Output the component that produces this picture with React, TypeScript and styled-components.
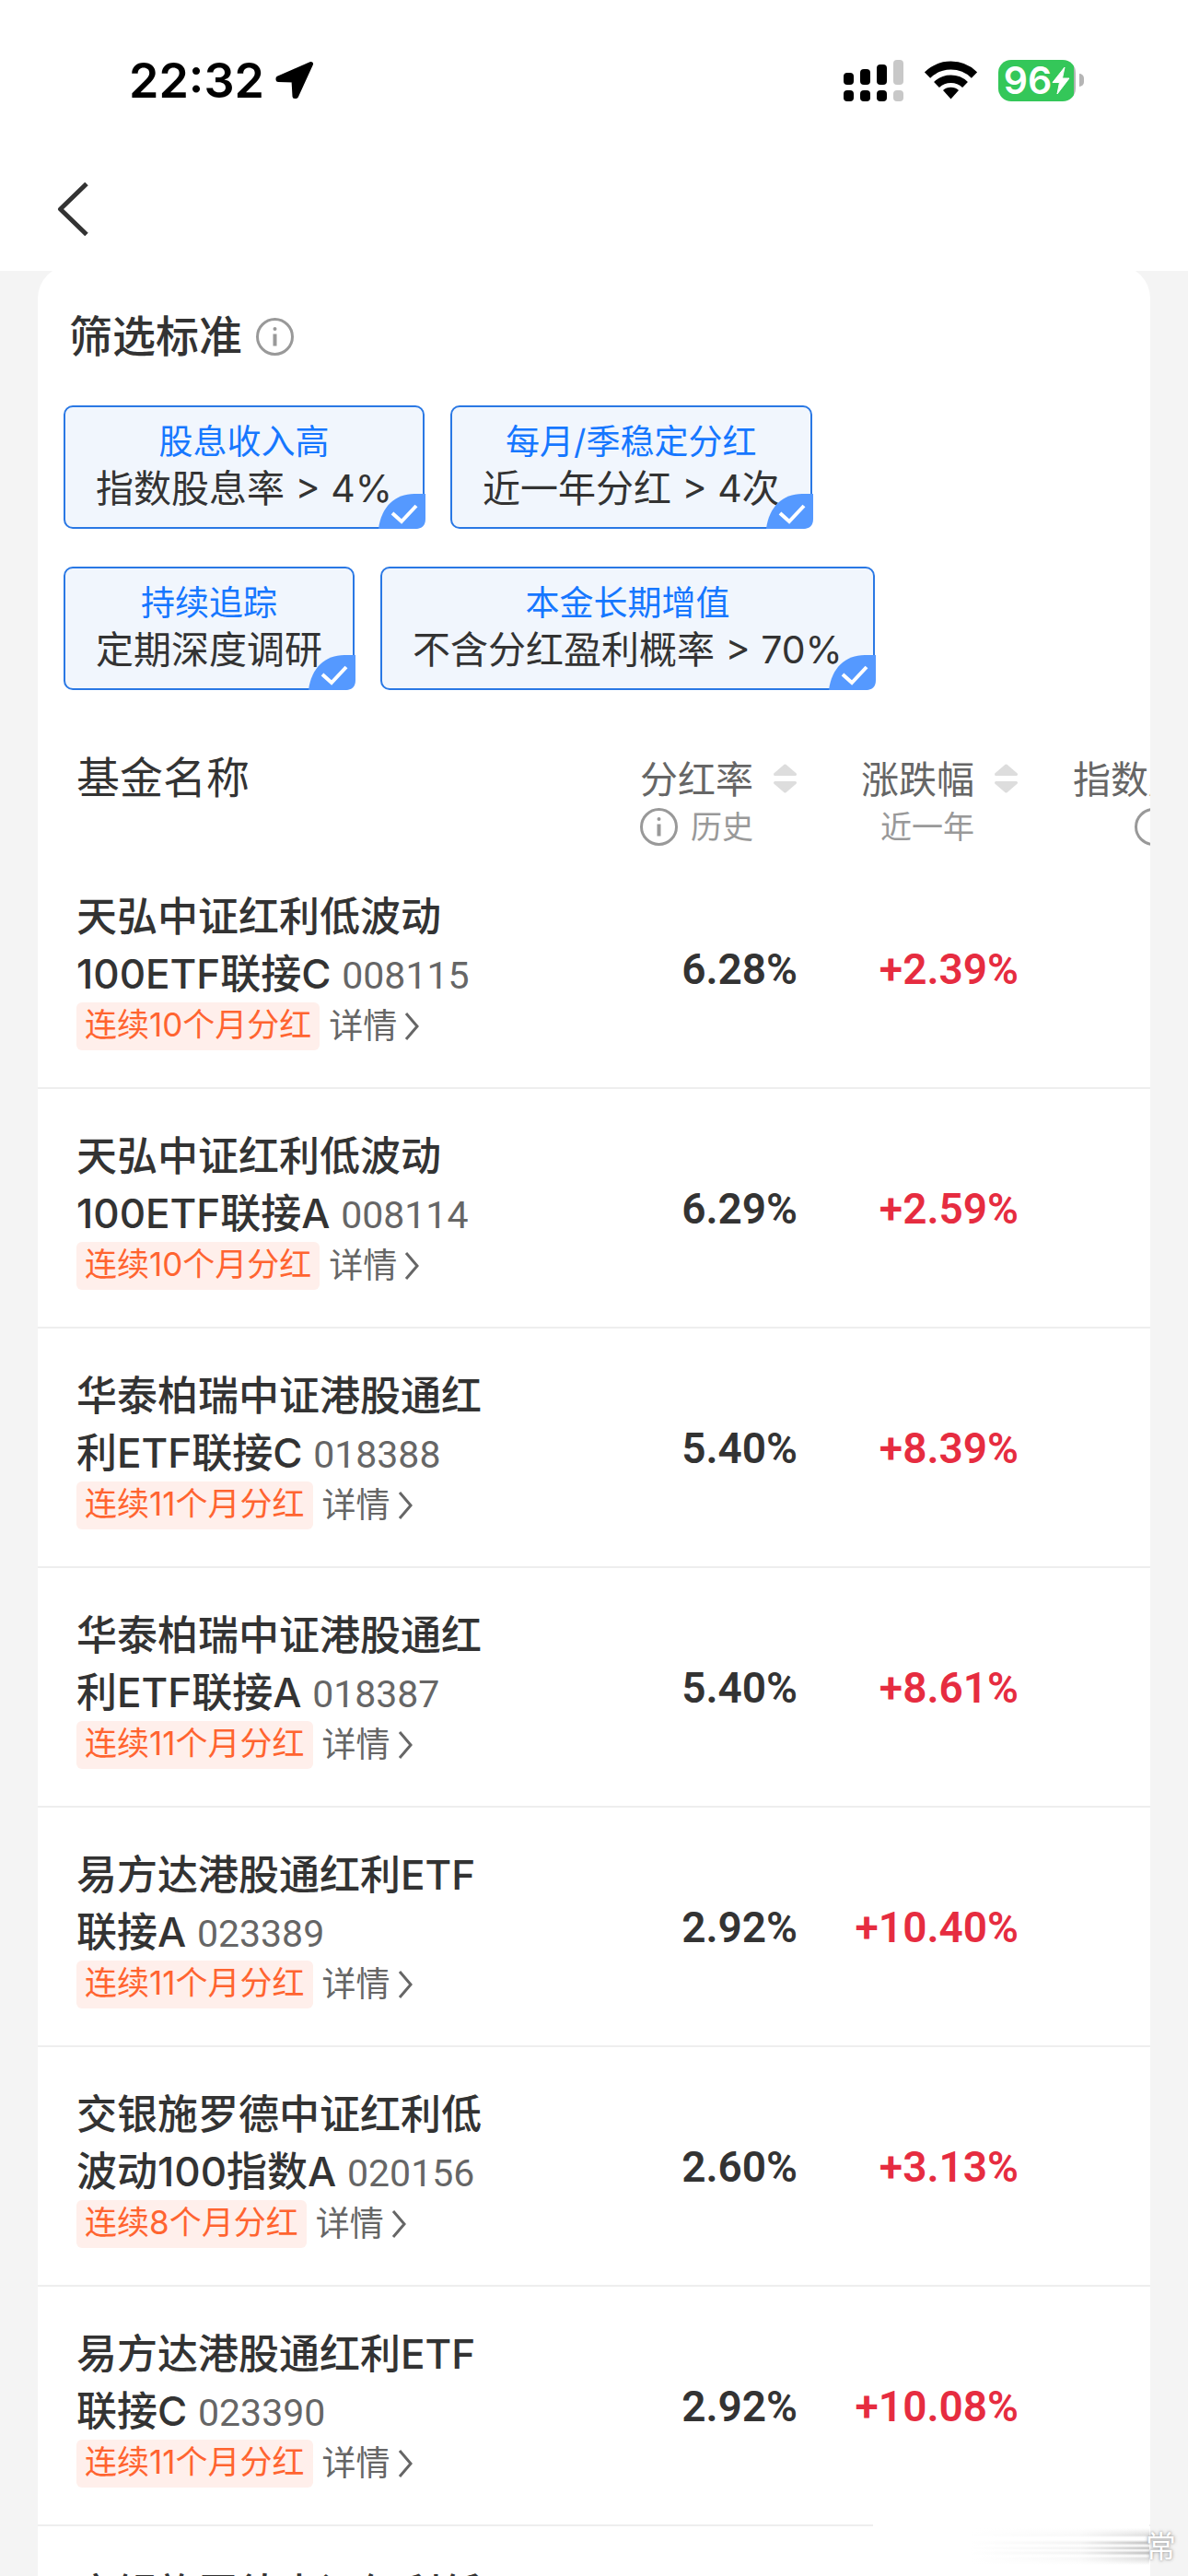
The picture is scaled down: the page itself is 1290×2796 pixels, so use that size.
import React from "react";
import styled, { createGlobalStyle } from "styled-components";

const CJK = '"Noto Sans CJK SC", sans-serif';

const GlobalStyle = createGlobalStyle`
  * { box-sizing: border-box; }
  body { margin: 0; background: #f4f4f4; font-family: Inter, ${CJK}; color: #333; }
  button { border: 0; padding: 0; background: none; font: inherit; color: inherit; display: flex; }
  svg { display: block; flex: none; }
`;

const Screen = styled.div`
  position: relative;
  height: 100vh;
  overflow: hidden;
`;

const Header = styled.header`
  background: #fff;
  padding-bottom: 14px;
`;

const StatusBar = styled.div`
  display: flex;
  justify-content: space-between;
  align-items: center;
  height: 174px;
  padding: 0 113px 0 140px;
  color: #000;
`;

const Clock = styled.div`
  display: flex;
  align-items: center;
  gap: 12px;
  font-size: 52px;
  font-weight: 600;
`;

const StatusIcons = styled.div`
  display: flex;
  align-items: center;
  gap: 23px;
`;

const Battery = styled.div`
  display: flex;
  align-items: center;
  gap: 4px;
`;

const BatteryBody = styled.div`
  display: flex;
  align-items: center;
  justify-content: center;
  width: 84px;
  height: 45px;
  border-radius: 14px;
  background: linear-gradient(to left, #b5b5b5 2px, #34c759 2px);
  color: #fff;
  font-size: 41px;
  line-height: 45px;
  font-weight: 600;
`;

const BatteryTip = styled.i`
  width: 5px;
  height: 14px;
  border-radius: 0 6px 6px 0;
  background: #b5b5b5;
`;

const NavBar = styled.nav`
  display: flex;
  align-items: center;
  height: 106px;
  padding-left: 61px;
`;

const Card = styled.main`
  margin: -6px 41px 0;
  overflow: hidden;
  border-radius: 36px 36px 0 0;
  background: #fff;
`;

const TitleRow = styled.div`
  display: flex;
  align-items: center;
  gap: 15px;
  height: 70px;
  margin-top: 42px;
  padding-left: 34px;
`;

const Title = styled.h1`
  margin: 0;
  font-size: 47px;
  line-height: 70px;
  font-weight: 500;
`;

const Filters = styled.div`
  display: flex;
  flex-direction: column;
  gap: 41px;
  padding: 40px 28px 0;
`;

const FilterLine = styled.div`
  display: flex;
  gap: 28px;
`;

const Chip = styled.label`
  position: relative;
  display: flex;
  flex-direction: column;
  align-items: center;
  height: 134px;
  padding: 13px 33px 0;
  border: 2px solid #2a78e4;
  border-radius: 10px;
  background: #f1f6fd;
  font-size: 41px;
  line-height: 50px;
  white-space: nowrap;
`;

const ChipTick = styled.input`
  position: absolute;
  opacity: 0;
  right: 8px;
  bottom: 8px;
  margin: 0;
`;

const ChipLabel = styled.span`
  color: #1677ff;
  font-size: 37px;
`;

const ChipMark = styled.svg`
  position: absolute;
  right: -3px;
  bottom: -2px;
`;

const Table = styled.table`
  width: 100%;
  margin-top: 58px;
  table-layout: fixed;
  border-collapse: separate;
  border-spacing: 0;
`;

const Col = styled.col<{ $width?: number }>`
  width: ${(p) => (p.$width ? `${p.$width}px` : "auto")};
`;

const HeadCell = styled.th<{ $main?: boolean; $indent?: number }>`
  height: 115px;
  padding: ${(p) => (p.$main ? "2px 0 0 42px" : `8px 0 0 ${p.$indent ?? 0}px`)};
  vertical-align: top;
  overflow: hidden;
  color: ${(p) => (p.$main ? "#333" : "#666")};
  font-size: ${(p) => (p.$main ? 47 : 41)}px;
  line-height: ${(p) => (p.$main ? 70 : 62)}px;
  font-weight: 400;
  text-align: left;
  white-space: nowrap;
`;

const HeadStack = styled.div`
  display: flex;
  justify-content: flex-end;
  align-items: flex-start;
  gap: 21px;
`;

const HeadText = styled.div`
  display: flex;
  flex-direction: column;
  align-items: flex-end;
`;

const HeadNote = styled.span<{ $indent?: number }>`
  display: flex;
  align-items: center;
  gap: 14px;
  height: 41px;
  margin-left: ${(p) => p.$indent ?? 0}px;
  color: #999;
  font-size: 34px;
  line-height: 41px;
`;

const SortButton = styled.button`
  height: 60px;
  align-items: center;
`;

const NameCell = styled.td`
  height: 260px;
  padding: 42px 0 0 42px;
  border-bottom: 2px solid #eee;
  vertical-align: top;
`;

const FundName = styled.div`
  width: 460px;
  font-size: 44px;
  line-height: 62px;
  font-weight: 500;
`;

const Code = styled.span`
  color: #666;
  font-family: Roboto, ${CJK};
  font-size: 41px;
  line-height: 41px;
  font-weight: 400;
`;

const Meta = styled.div`
  display: flex;
  align-items: center;
  gap: 10px;
  height: 52px;
`;

const Tag = styled.span`
  height: 52px;
  padding: 0 9px;
  border-radius: 6px;
  background: #ffefeb;
  color: #ff6430;
  font-size: 35px;
  line-height: 49px;
`;

const Detail = styled.a`
  display: flex;
  align-items: center;
  gap: 8px;
  color: #666;
  font-size: 37px;
  line-height: 52px;
  text-decoration: none;
`;

const ValueCell = styled.td<{ $up?: boolean }>`
  padding: 2px 0 0;
  border-bottom: 2px solid #eee;
  color: ${(p) => (p.$up ? "#e62c40" : "#333")};
  font-family: Roboto, ${CJK};
  font-size: 46px;
  font-weight: 600;
  text-align: right;
`;

const Watermark = styled.div`
  position: absolute;
  right: 13px;
  bottom: 8px;
  display: flex;
  align-items: center;
  width: 329px;
  height: 48px;
  color: #fff;
  font-size: 33px;
  line-height: 48px;
  text-shadow: 0 0 2px #999, 0 0 4px #aaa;
`;

const Smear = styled.div`
  flex: 1;
  height: 48px;
  margin-right: -4px;
  background:
    linear-gradient(to right, #fff 0, #fff 35%, rgba(255, 255, 255, 0.8) 75%, transparent),
    linear-gradient(
      to bottom,
      #fff 4px, #ddd 12px, #fff 14px, #fff 17px, #bbb 20px, #fff 23px,
      #bbb 26px, #fff 28px, #bbb 31px, #fff 34px, #ddd 37px, #fff 44px
    );
`;

const LocationArrow = () => (
  <svg width="42" height="42" viewBox="0 0 42 42">
    <path d="M38.500 3.500 3 19v1.500l17 .5 1 17.500h1.500Z" fill="#000" stroke="#000" strokeWidth="5" strokeLinejoin="round" />
  </svg>
);

const Signal = () => (
  <svg width="65" height="45" viewBox="0 0 65 45">
    {[[0, 14, 13], [18, 10, 17], [36, 5, 22], [54, 0, 27]].map(([x, y, h]) => (
      <g key={x} fill={x === 54 ? "#c8c8c8" : "#000"}>
        <rect x={x} y={y} width="11" height={h} rx="4" />
        <rect x={x} y="33" width="11" height="12" rx="4" />
      </g>
    ))}
  </svg>
);

const Wifi = () => (
  <svg width="57" height="44" viewBox="0 0 57 44">
    <path d="M3 16.500a36.500 36.500 0 0 1 51 0" fill="none" stroke="#000" strokeWidth="9" />
    <path d="M13 27a22.500 22.500 0 0 1 31 0" fill="none" stroke="#000" strokeWidth="8.500" />
    <path d="M20 33a13 13 0 0 1 17 0L28.500 42.500Z" fill="#000" />
  </svg>
);

const Bolt = () => (
  <svg width="20" height="31" viewBox="0 0 20 31">
    <path d="M14 1 1 17.500h7.500L6 30 19 13h-7.500Z" fill="#fff" stroke="#fff" strokeLinejoin="round" />
  </svg>
);

const BackIcon = () => (
  <svg width="36" height="58" viewBox="0 0 36 58">
    <path d="M33 1.500 4.500 29 33 56.500" fill="none" stroke="#333" strokeWidth="5" strokeLinejoin="round" />
  </svg>
);

const InfoIcon = () => (
  <svg width="41" height="41" viewBox="0 0 41 41">
    <circle cx="20.500" cy="20.500" r="19" fill="none" stroke="#999" strokeWidth="3" />
    <circle cx="20.500" cy="12" r="2" fill="#999" />
    <path d="M20.500 17.500v13" stroke="#999" strokeWidth="4" />
  </svg>
);

const SortIcon = () => (
  <svg width="27" height="32" viewBox="0 0 27 32">
    <path d="m13.500 2 11 9.500h-22ZM13.500 30l11-9.500h-22Z" fill="#ddd" stroke="#ddd" strokeWidth="3" strokeLinejoin="round" />
  </svg>
);

const ArrowIcon = () => (
  <svg width="17" height="32" viewBox="0 0 17 32">
    <path d="m2 2 12 14L2 30" fill="none" stroke="#666" strokeWidth="3" />
  </svg>
);

const filters = [
  [["股息收入高", "指数股息率 > 4%"], ["每月/季稳定分红", "近一年分红 > 4次"]],
  [["持续追踪", "定期深度调研"], ["本金长期增值", "不含分红盈利概率 > 70%"]],
];

const funds = [
  ["天弘中证红利低波动100ETF联接C", "008115", 10, "6.28%", "+2.39%"],
  ["天弘中证红利低波动100ETF联接A", "008114", 10, "6.29%", "+2.59%"],
  ["华泰柏瑞中证港股通红利ETF联接C", "018388", 11, "5.40%", "+8.39%"],
  ["华泰柏瑞中证港股通红利ETF联接A", "018387", 11, "5.40%", "+8.61%"],
  ["易方达港股通红利ETF联接A", "023389", 11, "2.92%", "+10.40%"],
  ["交银施罗德中证红利低波动100指数A", "020156", 8, "2.60%", "+3.13%"],
  ["易方达港股通红利ETF联接C", "023390", 11, "2.92%", "+10.08%"],
] as const;

export default function App() {
  return (
    <Screen>
      <GlobalStyle />
      <Header>
        <StatusBar>
          <Clock>22:32<LocationArrow /></Clock>
          <StatusIcons>
            <Signal />
            <Wifi />
            <Battery>
              <BatteryBody>96<Bolt /></BatteryBody>
              <BatteryTip />
            </Battery>
          </StatusIcons>
        </StatusBar>
        <NavBar>
          <button aria-label="返回"><BackIcon /></button>
        </NavBar>
      </Header>
      <Card>
        <TitleRow>
          <Title>筛选标准</Title>
          <button aria-label="说明"><InfoIcon /></button>
        </TitleRow>
        <Filters>
          {filters.map((line, i) => (
            <FilterLine key={i}>
              {line.map(([label, rule]) => (
                <Chip key={label}>
                  <ChipTick type="checkbox" defaultChecked />
                  <ChipLabel>{label}</ChipLabel>
                  {rule}
                  <ChipMark width="51" height="38" viewBox="0 0 51 38">
                    <path d="M0 38C3 14 18 0 39 0h12v27q0 11-11 11Z" fill="#5599ff" />
                    <path d="m15 21 10 9 16-17" fill="none" stroke="#fff" strokeWidth="4" />
                  </ChipMark>
                </Chip>
              ))}
            </FilterLine>
          ))}
        </Filters>
        <Table>
          <colgroup><Col /><Col $width={226} /><Col $width={240} /><Col $width={143} /></colgroup>
          <thead>
            <tr>
              <HeadCell $main>基金名称</HeadCell>
              <HeadCell>
                <HeadStack>
                  <HeadText>分红率<HeadNote><InfoIcon />历史</HeadNote></HeadText>
                  <SortButton aria-label="按分红率排序"><SortIcon /></SortButton>
                </HeadStack>
              </HeadCell>
              <HeadCell>
                <HeadStack>
                  <HeadText>涨跌幅<HeadNote>近一年</HeadNote></HeadText>
                  <SortButton aria-label="按涨跌幅排序"><SortIcon /></SortButton>
                </HeadStack>
              </HeadCell>
              <HeadCell $indent={59}>指数股<HeadNote $indent={67}><InfoIcon /></HeadNote></HeadCell>
            </tr>
          </thead>
          <tbody>
            {funds.map(([name, code, months, rate, change]) => (
              <tr key={code}>
                <NameCell>
                  <FundName>{name} <Code>{code}</Code></FundName>
                  <Meta>
                    <Tag>连续{months}个月分红</Tag>
                    <Detail href="#">详情<ArrowIcon /></Detail>
                  </Meta>
                </NameCell>
                <ValueCell>{rate}</ValueCell>
                <ValueCell $up>{change}</ValueCell>
                <ValueCell />
              </tr>
            ))}
            <tr>
              <NameCell colSpan={4}>
                <FundName>交银施罗德中证红利低</FundName>
              </NameCell>
            </tr>
          </tbody>
        </Table>
      </Card>
      <Watermark><Smear />常</Watermark>
    </Screen>
  );
}
